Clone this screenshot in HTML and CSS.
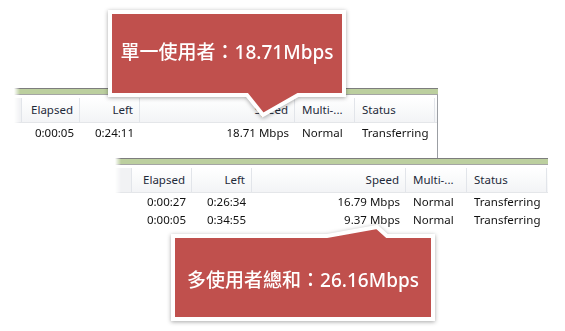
FILE: index.html
```html
<!DOCTYPE html>
<html lang="zh-Hant">
<head>
    <meta charset="UTF-8">
    <meta name="viewport" content="width=device-width, initial-scale=1.0">
    <title>Speed</title>
    <link rel="stylesheet" href="styles.css">
</head>
<body>

    <div class="canvas">

        <!-- 單一使用者 -->
        <section class="panel panel-single">
            <div class="band"></div>
            <div class="list">
                <div class="grid head">
                    <div class="cell"></div>
                    <div class="cell num">Elapsed</div>
                    <div class="cell num">Left</div>
                    <div class="cell num">Speed</div>
                    <div class="cell">Multi-...</div>
                    <div class="cell">Status</div>
                </div>
                <div class="grid row">
                    <div class="cell"></div>
                    <div class="cell num">0:00:05</div>
                    <div class="cell num">0:24:11</div>
                    <div class="cell num">18.71 Mbps</div>
                    <div class="cell">Normal</div>
                    <div class="cell">Transferring</div>
                </div>
            </div>
        </section>

        <!-- 多使用者 -->
        <section class="panel panel-multi">
            <div class="band"></div>
            <div class="list">
                <div class="grid head">
                    <div class="cell"></div>
                    <div class="cell num">Elapsed</div>
                    <div class="cell num">Left</div>
                    <div class="cell num">Speed</div>
                    <div class="cell">Multi-...</div>
                    <div class="cell">Status</div>
                </div>
                <div class="grid row">
                    <div class="cell"></div>
                    <div class="cell num">0:00:27</div>
                    <div class="cell num">0:26:34</div>
                    <div class="cell num">16.79 Mbps</div>
                    <div class="cell">Normal</div>
                    <div class="cell">Transferring</div>
                </div>
                <div class="grid row">
                    <div class="cell"></div>
                    <div class="cell num">0:00:05</div>
                    <div class="cell num">0:34:55</div>
                    <div class="cell num">9.37 Mbps</div>
                    <div class="cell">Normal</div>
                    <div class="cell">Transferring</div>
                </div>
            </div>
        </section>

        <div class="callout callout-single">
            <svg class="callout-shape" width="250" height="120" viewBox="0 0 250 120">
                <path d="M6 6 H240 V89 H194 L159 109 L143 89 H6 Z"/>
            </svg>
            <p class="callout-text">單一使用者：18.71Mbps</p>
        </div>

        <div class="callout callout-multi">
            <svg class="callout-shape" width="276" height="110" viewBox="0 0 276 110">
                <path d="M7 18 H161 L211 9 L221 18 H267 V101 H7 Z"/>
            </svg>
            <p class="callout-text">多使用者總和：26.16Mbps</p>
        </div>

    </div>

</body>
</html>
```

FILE: styles.css
```css
body {
    margin: 0;
    background: #fff;
    font-family: 'Noto Sans', 'Noto Sans CJK TC', sans-serif;
    font-size: 11.5px;
    color: #111;
}

.canvas {
    position: relative;
    width: 565px;
    height: 331px;
    overflow: hidden;
}

/* 截圖面板 */
.panel {
    display: flex;
    flex-direction: column;
    -webkit-mask-image: linear-gradient(to right, transparent, #000 6px);
    mask-image: linear-gradient(to right, transparent, #000 6px);
}

.panel-single {
    margin: 88px 0 0 14px;
    width: 424px;
    height: 70px;
}

.panel-multi {
    margin-left: 115px;
    width: 433px;
    height: 80px;
}

.band {
    height: 5px;
    background: #bccf9f;
    border-top: 1px solid #7d7d7d;
    border-bottom: 1px solid #a5a5a5;
}

.list {
    flex: 1;
    padding-top: 3px;
}

.panel-single .list {
    border-right: 1px solid #9b9ea3;
}

.grid {
    display: grid;
}

.panel-single .grid {
    grid-template-columns: 7px 59px 60px 155px 60px 80px;
}

.panel-multi .grid {
    grid-template-columns: 17px 60px 60px 154px 61px 80px;
}

.head {
    height: 24px;
    background: linear-gradient(#ffffff, #f3f4f6);
    border-bottom: 1px solid #e4e6e9;
    color: #1e2a3a;
}

.head .cell {
    border-right: 1px solid #e2e5ea;
    line-height: 24px;
}

.head .cell:first-child {
    background: #f1f2f4;
}

.row {
    height: 18px;
    line-height: 18px;
}

.panel-single .row {
    margin-top: 1px;
}

.cell {
    padding: 0 0 0 7px;
    white-space: nowrap;
    overflow: hidden;
}

.cell.num {
    text-align: right;
    padding: 0 6px 0 0;
}

/* 說明框 */
.callout {
    position: absolute;
}

.callout-single {
    left: 104px;
    top: 6px;
    width: 250px;
    height: 120px;
}

.callout-multi {
    left: 166px;
    top: 218px;
    width: 276px;
    height: 110px;
}

.callout-shape {
    display: block;
    overflow: visible;
    filter: drop-shadow(0 1px 2px rgba(0, 0, 0, 0.35));
}

.callout-shape path {
    fill: #c0504d;
    stroke: #fff;
    stroke-width: 4;
    stroke-linejoin: miter;
}

.callout-text {
    position: absolute;
    margin: 0;
    color: #fff;
    font-family: 'Noto Sans', 'Noto Sans CJK TC', sans-serif;
    font-size: 19px;
    font-weight: 500;
    white-space: nowrap;
    text-align: center;
    line-height: 28px;
}

.callout-single .callout-text {
    left: 8px;
    width: 230px;
    top: 32px;
}

.callout-multi .callout-text {
    left: 9px;
    width: 256px;
    top: 48px;
}
```
